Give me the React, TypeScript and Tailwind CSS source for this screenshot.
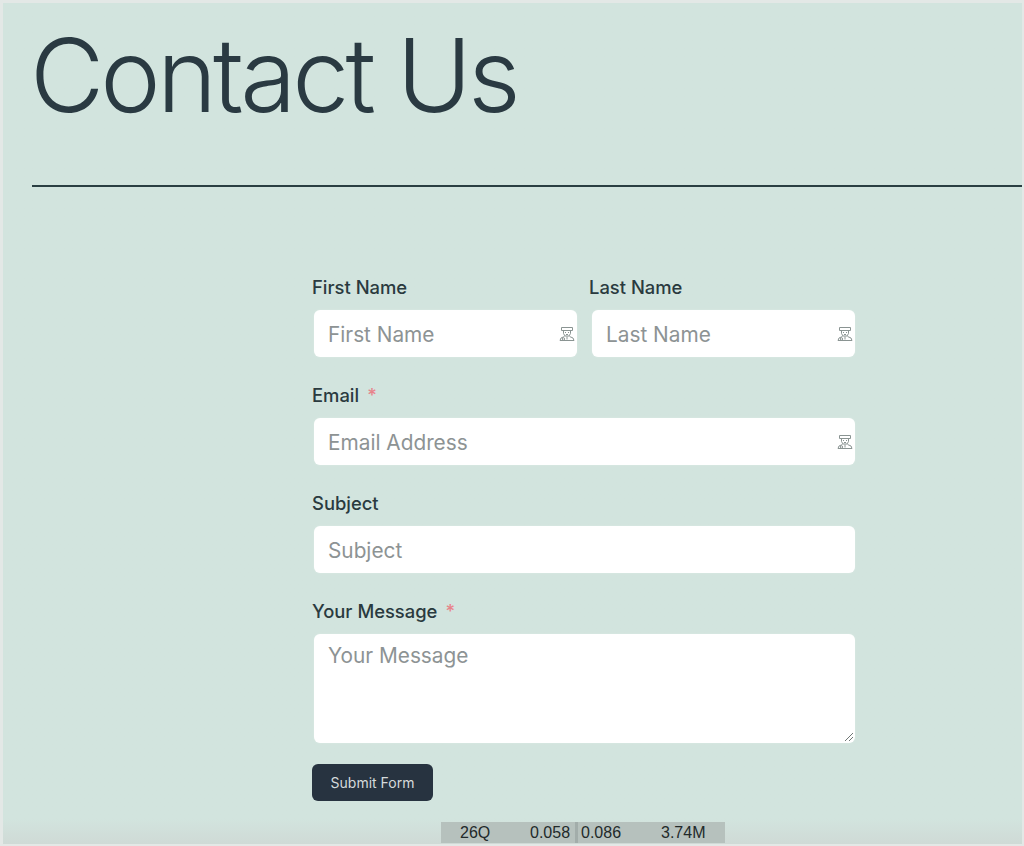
function AgentIcon() {
  return (
    <svg viewBox="0 0 16 16" className="absolute top-1/2 right-[2px] h-[16px] w-[16px] -translate-y-1/2 text-[#8a9492]" fill="none" stroke="currentColor" strokeWidth="1">
      <path d="M2.500 1.500h11v3h-11zM4.500 4.500v3l1.500 2.500h4l1.500-2.500v-3" />
      <path d="M6 6.500h1M9 6.500h1M7 8.500h2" />
      <path d="M5.500 10.500l-3.500 1.500-1 2.500h14l-1-2.500-3.500-1.500" />
      <circle cx="4.500" cy="13" r="1.200" />
      <path d="M8 10.500v3" />
    </svg>
  );
}

function Label({ text, required }: { text: string; required?: boolean }) {
  return (
    <label className="block h-[27px] text-[18.4px] leading-[27px] font-[450] text-[#2a3a3f]">
      {text}
      {required && <span className="ml-2 text-[#e8838b]">*</span>}
    </label>
  );
}

function Field({ placeholder, icon }: { placeholder: string; icon?: boolean }) {
  return (
    <div className="relative mt-[9px] ml-[2px] h-[47px] rounded-md bg-white pl-[14px] text-[20.8px] leading-[49px] text-[#8d9394] shadow-[0_0_2px_#deebe6]">
      {placeholder}
      {icon && <AgentIcon />}
    </div>
  );
}

export default function App() {
  return (
    <div className="h-[846px] w-[1024px] overflow-hidden border-t-[3px] border-r-2 border-b-2 border-l-[3px] border-[#e3e8e6] bg-linear-to-b from-[#d2e4de] from-[97%] to-[#cfdad6] font-['Inter',sans-serif]">
      <div className="ml-[29px] h-[184px] border-b-2 border-[#2a3f42]">
        <h1 className="-ml-[2px] pt-[12px] text-[102px] leading-[120px] font-[350] tracking-[-3.9px] text-[#2a3a42]">Contact Us</h1>
      </div>

      <div className="mt-[87px] ml-[309px] w-[543px]">
        <div className="flex gap-[13px]">
          <div className="w-[265px]">
            <Label text="First Name" />
            <Field placeholder="First Name" icon />
          </div>
          <div className="w-[265px]">
            <div className="-ml-px">
              <Label text="Last Name" />
            </div>
            <Field placeholder="Last Name" icon />
          </div>
        </div>

        <div className="mt-[25px]">
          <Label text="Email" required />
          <Field placeholder="Email Address" icon />
        </div>

        <div className="mt-[25px]">
          <Label text="Subject" />
          <Field placeholder="Subject" />
        </div>

        <div className="mt-[25px]">
          <Label text="Your Message" required />
          <div className="relative mt-[9px] ml-[2px] h-[109px] rounded-md bg-white pt-[7px] pl-[14px] text-[20.8px] leading-[30px] text-[#8d9394] shadow-[0_0_2px_#deebe6]">
            Your Message
            <svg viewBox="0 0 10 10" className="absolute right-[1px] bottom-[1px] h-[10px] w-[10px] text-[#6f7775]" fill="none" stroke="currentColor" strokeWidth="1">
              <path d="M1 9l8-8M5 9l4-4" />
            </svg>
          </div>
        </div>

        <button className="mt-[21px] block h-[37px] w-[121px] rounded-md bg-[#273340] text-[14px] font-normal text-[#d5dadb]">Submit Form</button>
      </div>

      <div className="mt-[21px] ml-[438px] flex h-[21px] w-[284px] bg-[#b6c1bd] font-['Liberation_Sans',sans-serif] text-[16px] leading-[21px] text-[#222a2a]">
        <span className="ml-[19px] w-[70px]">26Q</span>
        <span className="w-[45px]">0.058</span>
        <span className="mr-[3px] w-[3px] bg-[#a2adaa]" />
        <span className="w-[80px]">0.086</span>
        <span>3.74M</span>
      </div>
    </div>
  );
}
